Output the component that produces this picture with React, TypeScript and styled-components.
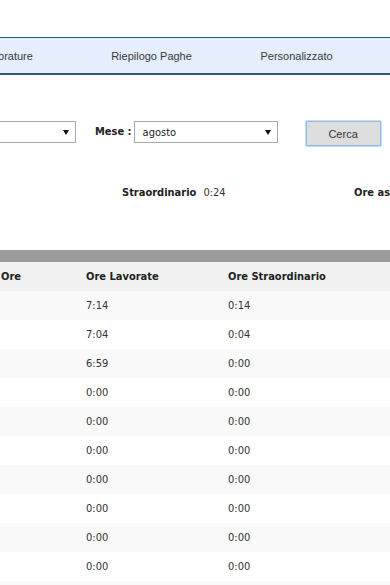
import React from "react";
import styled, { createGlobalStyle } from "styled-components";

const Global = createGlobalStyle`
  html, body { margin: 0; padding: 0; background: #fff; overflow: hidden; }
  body { width: 390px; height: 585px; font-family: "DejaVu Sans Condensed", "DejaVu Sans", sans-serif; }
`;

const Page = styled.div`
  width: 1100px;
  margin-left: -200px;
  padding-top: 37px;
`;

const Nav = styled.nav`
  display: flex;
  height: 35px;
  padding-left: 134px;
  background: #e4eefc;
  border-top: 1px solid #2d5b7c;
  border-bottom: 2px solid #2d5b7c;
`;

const NavItem = styled.a`
  width: 145px;
  display: flex;
  align-items: center;
  justify-content: center;
  font-family: "Liberation Sans", Arial, sans-serif;
  font-size: 11px;
  color: #3a3a3a;
  text-decoration: none;
`;

const FormRow = styled.div`
  display: flex;
  align-items: flex-start;
  margin-top: 46px;
  padding-left: 90px;
`;

const Field = styled.div<{ $gap: number; $inner: number }>`
  display: flex;
  align-items: center;
  gap: ${(p) => p.$inner}px;
  margin-right: ${(p) => p.$gap}px;
`;

const Label = styled.span<{ $w?: number }>`
  font-size: 11px;
  font-weight: bold;
  color: #222;
  height: 22px;
  line-height: 22px;
  ${(p) => (p.$w ? `width: ${p.$w}px; text-align: right;` : "")}
`;

const Select = styled.div`
  box-sizing: border-box;
  width: 144px;
  height: 22px;
  border: 1px solid #a9a9a9;
  background: #fff;
  display: flex;
  align-items: center;
  justify-content: space-between;
  padding: 0 6px 0 8px;
  font-size: 11px;
  color: #222;
`;

const Arrow = styled.svg`
  width: 6px;
  height: 5px;
  flex: none;
`;

const Button = styled.button`
  box-sizing: border-box;
  width: 75px;
  height: 25px;
  margin: 0;
  background: #dddddd;
  border: 1px solid #8fbcec;
  box-shadow: 0 0 0 1px #c6dcf5;
  border-radius: 1px;
  font-family: "Liberation Sans", Arial, sans-serif;
  font-size: 11px;
  color: #333;
  padding: 0;
`;

const Summary = styled.div`
  display: flex;
  margin-top: 40px;
  padding-left: 90px;
  height: 14px;
`;

const SummaryItem = styled.div`
  width: 232px;
  display: flex;
  gap: 7px;
  font-size: 11px;
  line-height: 14px;
`;

const SumLabel = styled.span`
  font-weight: bold;
  color: #222;
`;

const SumValue = styled.span`
  color: #333;
`;

const Table = styled.div`
  margin-top: 50px;
  border-top: 12px solid #9b9b9b;
`;

const Row = styled.div<{ $bg: string }>`
  display: grid;
  grid-template-columns: 193px 85px 142px 300px 1fr;
  height: 29px;
  align-items: center;
  background: ${(p) => p.$bg};
`;

const Cell = styled.div<{ $head?: boolean }>`
  padding-left: 8px;
  font-size: 11px;
  font-weight: ${(p) => (p.$head ? "bold" : "normal")};
  color: ${(p) => (p.$head ? "#222" : "#333")};
  white-space: nowrap;
`;

const data: [string, string, string][] = [
  ["01/08/2025", "7:14", "0:14"],
  ["02/08/2025", "7:04", "0:04"],
  ["03/08/2025", "6:59", "0:00"],
  ["04/08/2025", "0:00", "0:00"],
  ["05/08/2025", "0:00", "0:00"],
  ["06/08/2025", "0:00", "0:00"],
  ["07/08/2025", "0:00", "0:00"],
  ["08/08/2025", "0:00", "0:00"],
  ["09/08/2025", "0:00", "0:00"],
  ["10/08/2025", "0:00", "0:00"],
  ["11/08/2025", "0:00", "0:00"],
];

const DownArrow = () => (
  <Arrow viewBox="0 0 6 5">
    <polygon points="0,0 6,0 3,5" fill="#111" />
  </Arrow>
);

export default function App() {
  return (
    <>
      <Global />
      <Page>
        <Nav>
          <NavItem>Timbrature</NavItem>
          <NavItem>Riepilogo Paghe</NavItem>
          <NavItem>Personalizzato</NavItem>
          <NavItem>Esci</NavItem>
        </Nav>
        <FormRow>
          <Field $gap={19} $inner={4}>
            <Label $w={38}>Anno :</Label>
            <Select>
              <span>2025</span>
              <DownArrow />
            </Select>
          </Field>
          <Field $gap={28} $inner={2}>
            <Label>Mese :</Label>
            <Select>
              <span>agosto</span>
              <DownArrow />
            </Select>
          </Field>
          <Button>Cerca</Button>
        </FormRow>
        <Summary>
          <SummaryItem>
            <SumLabel>Ore Lavorate</SumLabel>
            <SumValue>21:17</SumValue>
          </SummaryItem>
          <SummaryItem>
            <SumLabel>Straordinario</SumLabel>
            <SumValue>0:24</SumValue>
          </SummaryItem>
          <SummaryItem>
            <SumLabel>Ore assenza</SumLabel>
            <SumValue>0:00</SumValue>
          </SummaryItem>
        </Summary>
        <Table>
          <Row $bg="#f1f1f1">
            <Cell $head>Data</Cell>
            <Cell $head>Ore</Cell>
            <Cell $head>Ore Lavorate</Cell>
            <Cell $head>Ore Straordinario</Cell>
            <Cell $head></Cell>
          </Row>
          {data.map((r, i) => (
            <Row key={r[0]} $bg={i % 2 === 0 ? "#f9f9f9" : "#ffffff"}>
              <Cell>{r[0]}</Cell>
              <Cell></Cell>
              <Cell>{r[1]}</Cell>
              <Cell>{r[2]}</Cell>
              <Cell></Cell>
            </Row>
          ))}
        </Table>
      </Page>
    </>
  );
}
